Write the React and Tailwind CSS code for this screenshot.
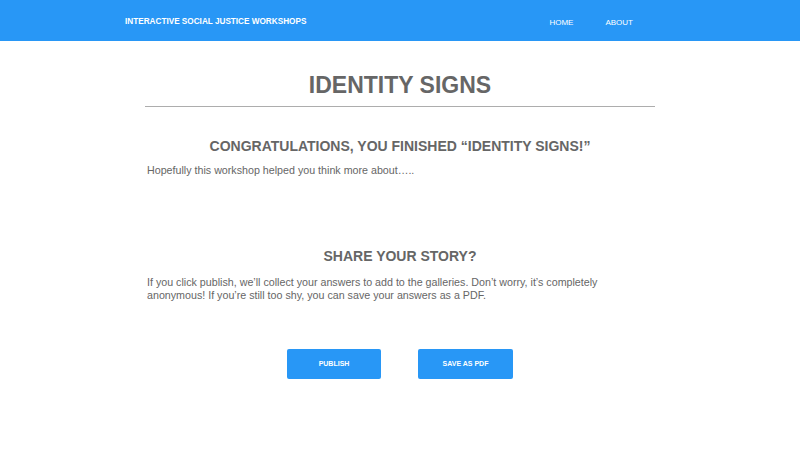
import React from "react";

const App = () => {
  return (
    <div
      className="min-h-screen bg-white text-[#666666]"
      style={{ fontFamily: '"Liberation Sans", Arial, sans-serif' }}
    >
      {/* Top bar */}
      <header className="h-[41px] bg-[#2897f6] flex items-center pt-[4px] px-[125px] text-white">
        <div className="text-[8.2px] font-bold">
          INTERACTIVE SOCIAL JUSTICE WORKSHOPS
        </div>
        <nav className="ml-auto flex gap-[32px] text-[8px] pr-[42px]">
          <a href="#">HOME</a>
          <a href="#">ABOUT</a>
        </nav>
      </header>

      <main className="w-[510px] mx-auto">
        <h1 className="text-center text-[23px] font-bold pt-[30px] leading-[28px]">
          IDENTITY SIGNS
        </h1>
        <hr className="mt-[7px] border-t-[1.5px] border-[#adadad]" />

        <h2 className="text-center text-[14px] font-bold mt-[30px] leading-[18px]">
          CONGRATULATIONS, YOU FINISHED “IDENTITY SIGNS!”
        </h2>
        <p className="text-[10.7px] mt-[8px] px-[2px] leading-[14px]">
          Hopefully this workshop helped you think more about…..
        </p>

        <h2 className="text-center text-[14px] font-bold mt-[70px] leading-[18px]">
          SHARE YOUR STORY?
        </h2>
        <p className="text-[10.7px] mt-[11px] px-[2px] leading-[13px]">
          If you click publish, we’ll collect your answers to add to the galleries. Don’t worry, it’s completely
          anonymous! If you’re still too shy, you can save your answers as a PDF.
        </p>

        <div className="flex justify-center gap-[37px] mt-[47px]">
          <button className="w-[94px] h-[30px] rounded-[2px] bg-[#2897f6] text-white text-[7px] font-bold">
            PUBLISH
          </button>
          <button className="w-[95px] h-[30px] rounded-[2px] bg-[#2897f6] text-white text-[7px] font-bold">
            SAVE AS PDF
          </button>
        </div>
      </main>
    </div>
  );
};

export default App;
